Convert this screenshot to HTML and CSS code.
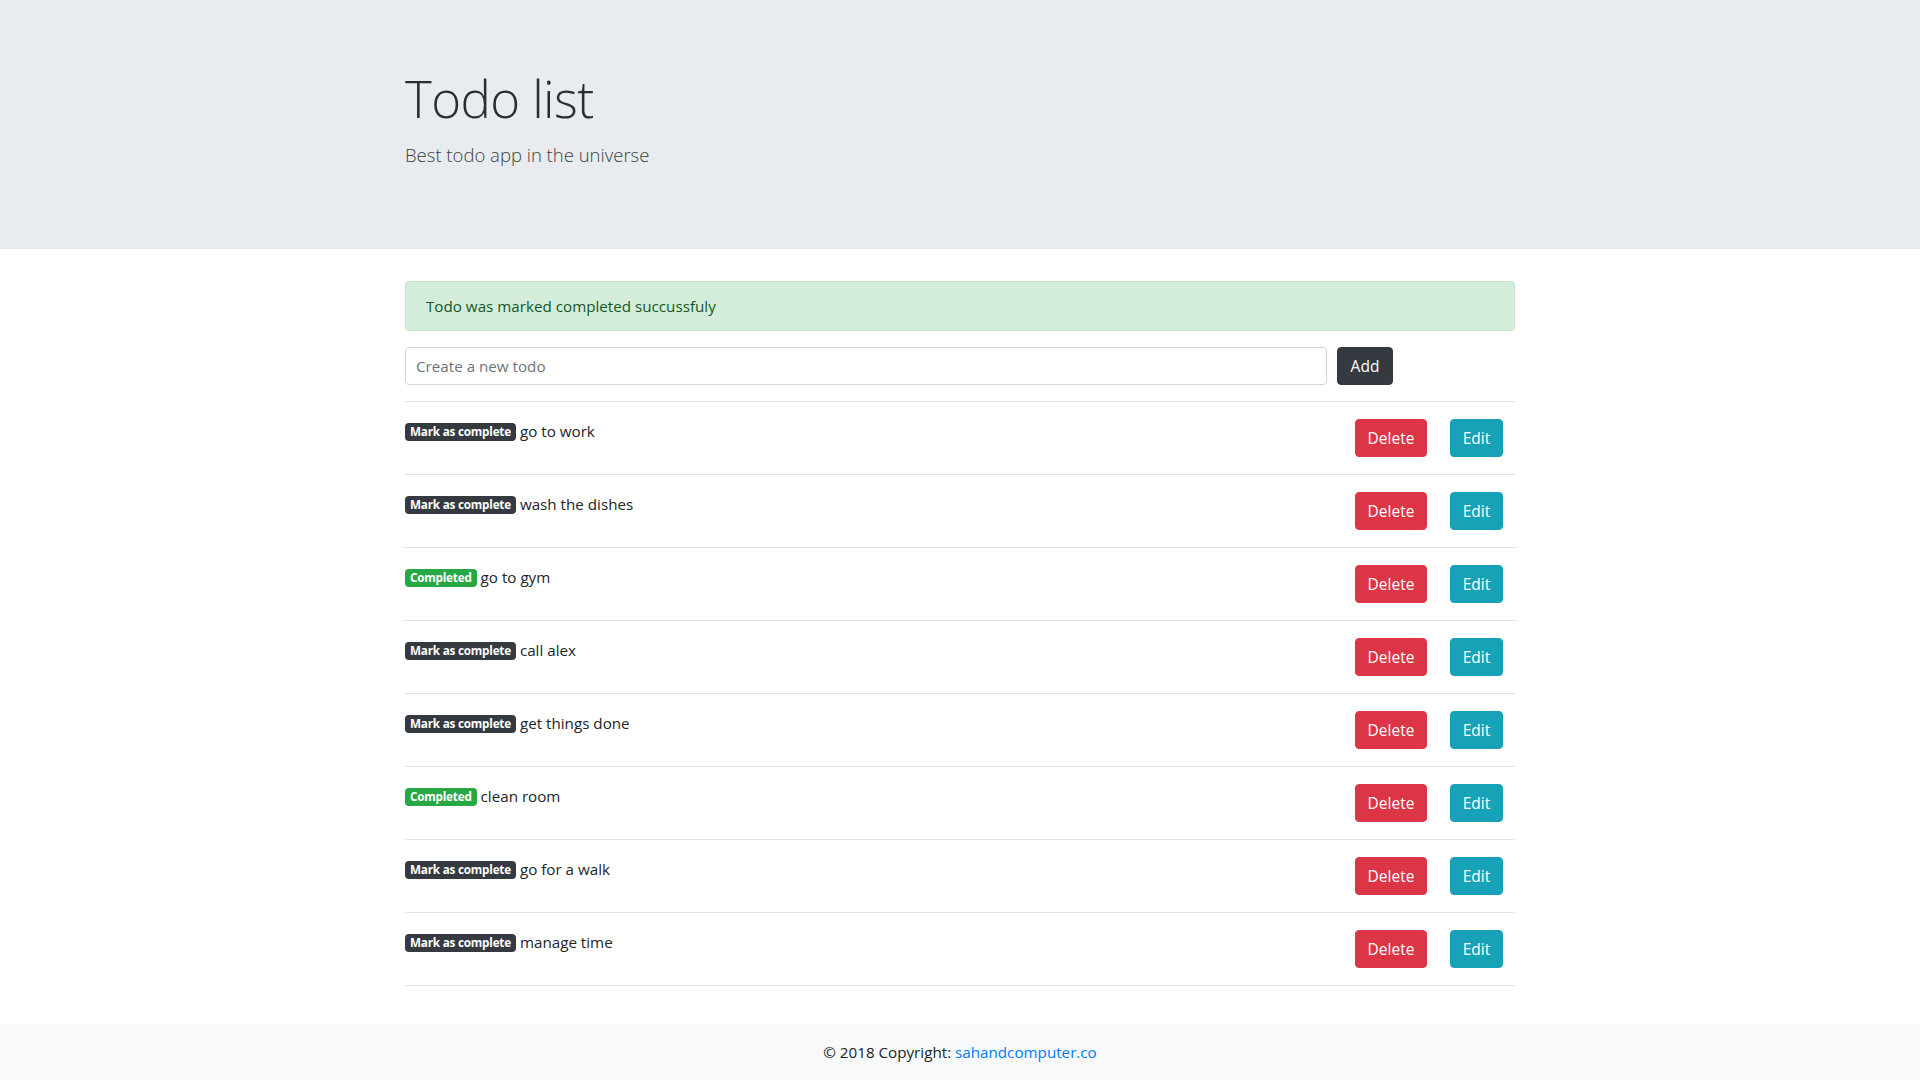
FILE: index.html
```html
<!DOCTYPE html>
<html lang="en">
<head>
<meta charset="utf-8">
<title>Todo list</title>
<link rel="stylesheet" href="styles.css">
</head>
<body>
<header class="jumbotron">
  <div class="container">
    <h1 class="display">Todo list</h1>
    <p class="lead">Best todo app in the universe</p>
  </div>
</header>
<main class="container">
  <div class="alert">Todo was marked completed succussfuly</div>
  <form class="add-form">
    <input class="todo-input" type="text" placeholder="Create a new todo">
    <button class="btn btn-dark" type="button">Add</button>
  </form>
  <ul class="todo-list">
    <li class="todo-row">
      <div class="todo-text"><span class="badge badge-dark">Mark as complete</span> go to work</div>
      <div class="todo-actions"><button class="btn btn-danger" type="button">Delete</button><button class="btn btn-info" type="button">Edit</button></div>
    </li>
    <li class="todo-row">
      <div class="todo-text"><span class="badge badge-dark">Mark as complete</span> wash the dishes</div>
      <div class="todo-actions"><button class="btn btn-danger" type="button">Delete</button><button class="btn btn-info" type="button">Edit</button></div>
    </li>
    <li class="todo-row">
      <div class="todo-text"><span class="badge badge-success">Completed</span> go to gym</div>
      <div class="todo-actions"><button class="btn btn-danger" type="button">Delete</button><button class="btn btn-info" type="button">Edit</button></div>
    </li>
    <li class="todo-row">
      <div class="todo-text"><span class="badge badge-dark">Mark as complete</span> call alex</div>
      <div class="todo-actions"><button class="btn btn-danger" type="button">Delete</button><button class="btn btn-info" type="button">Edit</button></div>
    </li>
    <li class="todo-row">
      <div class="todo-text"><span class="badge badge-dark">Mark as complete</span> get things done</div>
      <div class="todo-actions"><button class="btn btn-danger" type="button">Delete</button><button class="btn btn-info" type="button">Edit</button></div>
    </li>
    <li class="todo-row">
      <div class="todo-text"><span class="badge badge-success">Completed</span> clean room</div>
      <div class="todo-actions"><button class="btn btn-danger" type="button">Delete</button><button class="btn btn-info" type="button">Edit</button></div>
    </li>
    <li class="todo-row">
      <div class="todo-text"><span class="badge badge-dark">Mark as complete</span> go for a walk</div>
      <div class="todo-actions"><button class="btn btn-danger" type="button">Delete</button><button class="btn btn-info" type="button">Edit</button></div>
    </li>
    <li class="todo-row">
      <div class="todo-text"><span class="badge badge-dark">Mark as complete</span> manage time</div>
      <div class="todo-actions"><button class="btn btn-danger" type="button">Delete</button><button class="btn btn-info" type="button">Edit</button></div>
    </li>
  </ul>
</main>
<footer class="footer">© 2018 Copyright: <a class="footer-link" href="#">sahandcomputer.co</a></footer>
</body>
</html>
```

FILE: styles.css
```css
* { box-sizing: border-box; }

html, body {
  margin: 0;
  padding: 0;
}

body {
  font-family: "Open Sans", "Noto Sans", "Liberation Sans", sans-serif;
  font-size: 15.2px;
  line-height: 24px;
  color: #212529;
  background: #fff;
}

.container {
  width: 1110px;
  margin: 0 auto;
}

.jumbotron {
  background: #e9ecef;
  padding: 64px 0;
  margin-bottom: 32px;
}

.display {
  margin: 0 0 8px;
  font-size: 51px;
  line-height: 68px;
  font-weight: 300;
  letter-spacing: -0.6px;
  color: #2a2e33;
}

.lead {
  margin: 0;
  font-size: 18.5px;
  line-height: 30px;
  font-weight: 300;
  padding-bottom: 15px;
  color: #3a3f44;
}

.alert {
  background: #d4edda;
  border: 1px solid #c3e6cb;
  color: #155724;
  border-radius: 4px;
  padding: 12px 20px;
  margin-bottom: 16px;
}

.add-form {
  display: flex;
  gap: 10px;
  margin: 0 0 16px;
}

.todo-input {
  width: 922px;
  height: 38px;
  border: 1px solid #ced4da;
  border-radius: 4px;
  padding: 6px 10px;
  font-family: inherit;
  font-size: 15.2px;
  color: #495057;
  background: #fff;
}

.todo-input::placeholder {
  color: #6c757d;
}

.btn {
  display: inline-block;
  height: 38px;
  border: 1px solid transparent;
  border-radius: 4px;
  padding: 6px 0;
  font-family: inherit;
  font-size: 15.5px;
  line-height: 24px;
  color: #fff;
  text-align: center;
  cursor: pointer;
}

.btn-dark { background: #343a40; border-color: #343a40; width: 56px; }
.btn-danger { background: #dc3545; border-color: #dc3545; width: 72px; }
.btn-info { background: #17a2b8; border-color: #17a2b8; width: 53px; }

.todo-list {
  list-style: none;
  margin: 0;
  padding: 0;
  border-bottom: 1px solid #dee2e6;
}

.todo-row {
  display: flex;
  justify-content: space-between;
  align-items: flex-start;
  border-top: 1px solid #dee2e6;
  padding: 17px 12px 17px 0;
  height: 73px;
}

.todo-text {
  line-height: 24px;
}

.todo-actions {
  display: flex;
  gap: 23px;
}

.badge {
  display: inline-block;
  font-size: 11.7px;
  font-weight: 700;
  line-height: 1;
  padding: 3px 5px;
  border-radius: 4px;
  color: #fff;
  vertical-align: 1px;
  letter-spacing: -0.2px;
}

.badge-dark { background: #343a40; }
.badge-success { background: #28a745; }

.footer {
  margin-top: 38px;
  background: #f8f9fa;
  padding: 16px 0;
  text-align: center;
  line-height: 24px;
}

.footer-link {
  color: #007bff;
  text-decoration: none;
}
```
